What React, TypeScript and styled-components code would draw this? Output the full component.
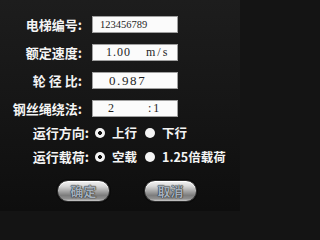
import React, { useState } from "react";
import styled, { createGlobalStyle } from "styled-components";

const GlobalStyle = createGlobalStyle`
  html, body {
    margin: 0;
    padding: 0;
    background: #141414;
  }
  * {
    box-sizing: border-box;
  }
`;

type FieldProps = {
  label: string;
  value: string;
  unit?: string;
  size?: number;
  tracking?: number;
  pad?: number;
};

type RadioOption = { key: string; text: string };

const Field = ({ label, value, unit, size = 12, tracking = 1, pad = 13 }: FieldProps) => (
  <Row>
    <Label $width={82}>{label}</Label>
    <InputBox $pad={pad}>
      <Value $size={size} $tracking={tracking}>
        {value}
      </Value>
      {unit ? <Unit>{unit}</Unit> : null}
    </InputBox>
  </Row>
);

const RadioRow = ({
  label,
  options,
  selected,
  onSelect,
}: {
  label: string;
  options: RadioOption[];
  selected: string;
  onSelect: (k: string) => void;
}) => (
  <OptionRow>
    <Label $width={89}>{label}</Label>
    <Options>
      {options.map((o) => (
        <Option key={o.key} onClick={() => onSelect(o.key)}>
          <Dot $checked={selected === o.key} />
          <OptionText>{o.text}</OptionText>
        </Option>
      ))}
    </Options>
  </OptionRow>
);

export default function App() {
  const [direction, setDirection] = useState("up");
  const [load, setLoad] = useState("empty");

  return (
    <Screen>
      <GlobalStyle />
      <Form>
        <Field label="电梯编号:" value="123456789" size={10.5} tracking={0} pad={7} />
        <Field label="额定速度:" value="1.00" unit="m/s" />
        <Field label="轮 径 比:" value="0.987" size={13} tracking={1.6} pad={16} />
        <Field label="钢丝绳绕法:" value="2" unit=":1" pad={15} />
      </Form>
      <Choices>
        <RadioRow
          label="运行方向:"
          options={[
            { key: "up", text: "上行" },
            { key: "down", text: "下行" },
          ]}
          selected={direction}
          onSelect={setDirection}
        />
        <RadioRow
          label="运行载荷:"
          options={[
            { key: "empty", text: "空载" },
            { key: "over", text: "1.25倍载荷" },
          ]}
          selected={load}
          onSelect={setLoad}
        />
      </Choices>
      <Buttons>
        <GlossButton>确定</GlossButton>
        <GlossButton>取消</GlossButton>
      </Buttons>
    </Screen>
  );
}

const Screen = styled.div`
  width: 240px;
  height: 211px;
  padding-top: 16px;
  background: linear-gradient(180deg, #1d1d1d 0%, #151515 55%, #0e0e0e 100%);
  font-family: "Noto Sans CJK SC", "Liberation Sans", sans-serif;
  color: #f4f4f4;
  overflow: hidden;
`;

const Form = styled.div`
  display: flex;
  flex-direction: column;
  gap: 11px;
`;

const Row = styled.div`
  display: flex;
  align-items: center;
  gap: 10px;
  height: 17px;
`;

const Label = styled.div<{ $width: number }>`
  width: ${(p) => p.$width}px;
  flex: none;
  text-align: right;
  font-size: 13px;
  font-weight: 700;
  line-height: 17px;
  white-space: pre;
`;

const InputBox = styled.div<{ $pad: number }>`
  width: 86px;
  height: 17px;
  display: grid;
  grid-template-columns: 40px auto;
  align-items: center;
  padding-left: ${(p) => p.$pad}px;
  background: #fbfbfb;
  border: 1px solid #a0a0a0;
  color: #1e1e1e;
  font-family: "Liberation Serif", "DejaVu Serif", serif;
`;

const Value = styled.span<{ $size: number; $tracking: number }>`
  font-size: ${(p) => p.$size}px;
  letter-spacing: ${(p) => p.$tracking}px;
  line-height: 15px;
  white-space: nowrap;
`;

const Unit = styled.span`
  font-size: 12px;
  letter-spacing: 2px;
  line-height: 15px;
  white-space: nowrap;
`;

const Choices = styled.div`
  display: flex;
  flex-direction: column;
  gap: 7px;
  margin-top: 7px;
`;

const OptionRow = styled.div`
  display: flex;
  align-items: center;
  gap: 6px;
  height: 17px;
`;

const Options = styled.div`
  display: flex;
  align-items: center;
  gap: 8px;
`;

const Option = styled.label`
  display: flex;
  align-items: center;
  gap: 7px;
  cursor: pointer;
`;

const Dot = styled.span<{ $checked: boolean }>`
  width: 10px;
  height: 10px;
  flex: none;
  border-radius: 50%;
  background: ${(p) =>
    p.$checked
      ? "radial-gradient(circle, #111 0 1.6px, #f4f4f4 2.2px)"
      : "#f4f4f4"};
`;

const OptionText = styled.span`
  font-size: 12.5px;
  font-weight: 700;
  line-height: 17px;
  white-space: nowrap;
`;

const Buttons = styled.div`
  display: flex;
  gap: 34px;
  padding-left: 57px;
  margin-top: 15px;
`;

const GlossButton = styled.button`
  width: 53px;
  height: 22px;
  padding: 0;
  border: 1px solid #2c2c2c;
  border-radius: 11px;
  background: linear-gradient(
    180deg,
    #f4f4f4 0%,
    #dadada 25%,
    #a8a8a8 50%,
    #7c7c7c 72%,
    #8e8e8e 88%,
    #c8c8c8 100%
  );
  box-shadow: inset 0 1px 0 #ffffff, 0 0 0 1px #0a0a0a;
  font-family: "Noto Sans CJK SC", sans-serif;
  font-size: 13px;
  font-weight: 700;
  color: #a3aebb;
  text-shadow: 0 0 1px #1a1a1a, 0 0 1px #1a1a1a;
  line-height: 20px;
`;
